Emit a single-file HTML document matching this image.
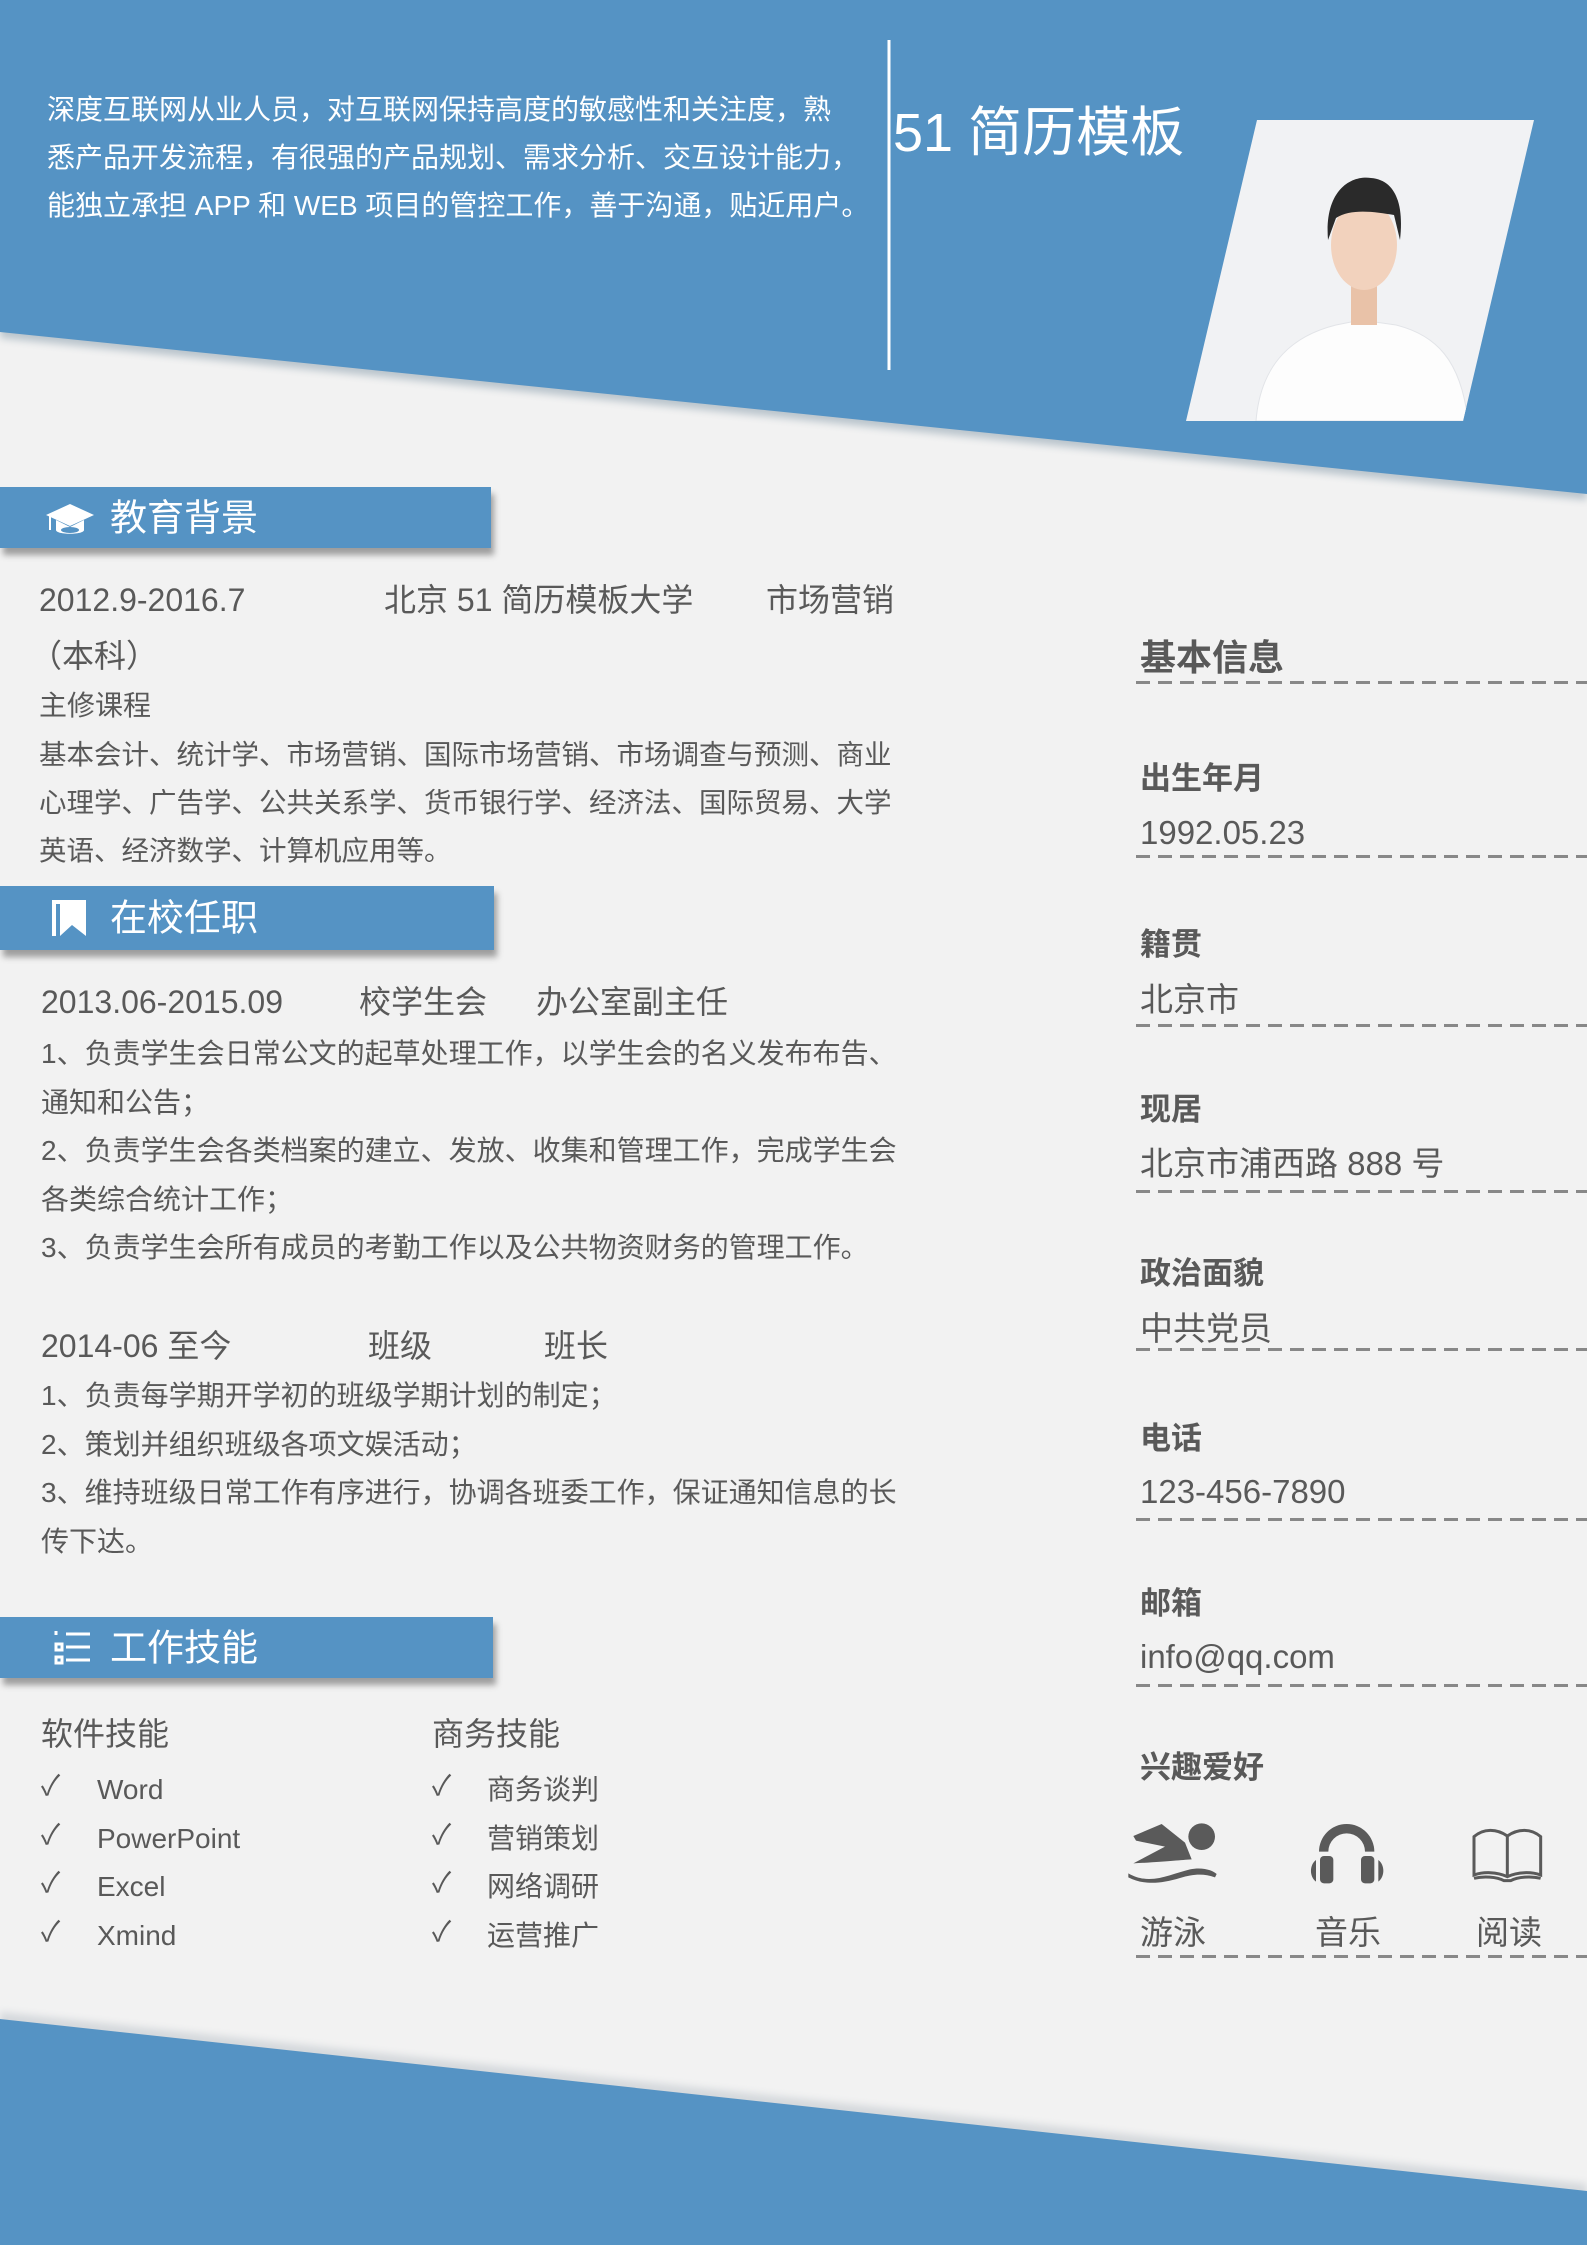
<!DOCTYPE html>
<html><head><meta charset="utf-8"><style>
*{margin:0;padding:0;box-sizing:border-box}
body{width:1587px;height:2245px;background:#f2f2f2;position:relative;overflow:hidden;font-family:"Liberation Sans","Noto Sans CJK SC",sans-serif;color:#595959}
.a{position:absolute;white-space:nowrap}
.w{color:#fff}
.bar{position:absolute;left:0;background:#5593c4;box-shadow:3px 7px 6px rgba(0,0,0,.35)}
.bar span{position:absolute;left:110px;top:50%;transform:translateY(-50%);color:#fff;font-size:37px;line-height:1}
.bar svg{position:absolute}
.dash{position:absolute;left:1136px;right:0;height:3px;background:repeating-linear-gradient(90deg,#888 0 14px,transparent 14px 22px)}
.lab{font-weight:bold;font-size:31px;line-height:40px}
.val{font-size:33px;line-height:40px}
.t28{font-size:28px;line-height:36px}
.t32{font-size:32px;line-height:40px}
</style></head><body>
<svg class="a" style="left:0;top:0" width="1587" height="2245">
<defs><filter id="s" x="-5%" y="-5%" width="110%" height="120%"><feGaussianBlur stdDeviation="4"/></filter></defs>
<polygon points="0,0 1587,0 1587,500 0,338" fill="#b9c4cc" filter="url(#s)"/>
<polygon points="0,0 1587,0 1587,494 0,332" fill="#5593c4"/>
<polygon points="0,2012 1587,2184 1587,2245 0,2245" fill="#d4d8dc" filter="url(#s)"/>
<polygon points="0,2019 1587,2191 1587,2245 0,2245" fill="#5593c4"/>
<line x1="889" y1="40" x2="889" y2="370" stroke="#fff" stroke-width="3"/>
</svg>
<div class="a w" style="left:47px;top:86px;font-size:28px;line-height:48px">深度互联网从业人员，对互联网保持高度的敏感性和关注度，熟<br>悉产品开发流程，有很强的产品规划、需求分析、交互设计能力，<br>能独立承担 APP 和 WEB 项目的管控工作，善于沟通，贴近用户。</div>
<div class="a w" style="left:893px;top:100px;font-size:54px;line-height:66px">51 简历模板</div>
<svg class="a" style="left:1186px;top:120px" width="348" height="301">
<clipPath id="c"><polygon points="71,0 348,0 277,301 0,301"/></clipPath>
<g clip-path="url(#c)">
<rect width="348" height="301" fill="#f1f2f4"/>
<path d="M70,301 C75,240 110,215 150,205 L175,200 L210,205 C250,215 275,240 282,301Z" fill="#fdfdfd" stroke="#e2e4e8"/>
<rect x="165" y="150" width="26" height="55" fill="#e9c2a8"/>
<ellipse cx="178" cy="125" rx="33" ry="45" fill="#f2d2bd"/>
<path d="M142,120 C138,70 165,55 185,58 C210,60 218,85 214,120 L208,95 C190,92 165,88 150,98Z" fill="#2a2a2a"/>
</g></svg>

<div class="bar" style="top:487px;width:491px;height:61px"><svg style="left:44px;top:15px" width="52" height="34" viewBox="0 0 52 34"><path d="M26,2 L50,13 L26,24 L2,13Z" fill="#fff"/><path d="M12,18 V28 C12,33 40,33 40,28 V18 L26,25Z" fill="#fff"/><ellipse cx="26" cy="28" rx="9" ry="3" fill="#5593c4"/><rect x="5" y="14" width="2" height="14" fill="#fff"/></svg><span>教育背景</span></div>
<div class="a t32" style="left:39px;top:580px">2012.9-2016.7</div>
<div class="a t32" style="left:384px;top:580px">北京 51 简历模板大学</div>
<div class="a t32" style="left:766px;top:580px">市场营销</div>
<div class="a t32" style="left:30px;top:636px">（本科）</div>
<div class="a t28" style="left:39px;top:688px">主修课程</div>
<div class="a" style="left:39px;top:731px;font-size:27.5px;line-height:48px">基本会计、统计学、市场营销、国际市场营销、市场调查与预测、商业<br>心理学、广告学、公共关系学、货币银行学、经济法、国际贸易、大学<br>英语、经济数学、计算机应用等。</div>

<div class="bar" style="top:886px;width:494px;height:64px"><svg style="left:50px;top:12px" width="40" height="40" viewBox="0 0 40 40"><path d="M2,2 H36 V38 L22,27 L10,38 V6 H6 V38 H2Z" fill="#fff"/></svg><span>在校任职</span></div>
<div class="a t32" style="left:41px;top:982px">2013.06-2015.09</div>
<div class="a t32" style="left:359px;top:982px">校学生会</div>
<div class="a t32" style="left:536px;top:982px">办公室副主任</div>
<div class="a" style="left:41px;top:1030px;font-size:28px;line-height:48.5px">1、负责学生会日常公文的起草处理工作，以学生会的名义发布布告、<br>通知和公告；<br>2、负责学生会各类档案的建立、发放、收集和管理工作，完成学生会<br>各类综合统计工作；<br>3、负责学生会所有成员的考勤工作以及公共物资财务的管理工作。</div>
<div class="a t32" style="left:41px;top:1326px">2014-06 至今</div>
<div class="a t32" style="left:368px;top:1326px">班级</div>
<div class="a t32" style="left:544px;top:1326px">班长</div>
<div class="a" style="left:41px;top:1372px;font-size:28px;line-height:48.5px">1、负责每学期开学初的班级学期计划的制定；<br>2、策划并组织班级各项文娱活动；<br>3、维持班级日常工作有序进行，协调各班委工作，保证通知信息的长<br>传下达。</div>

<div class="bar" style="top:1617px;width:493px;height:61px"><svg style="left:52px;top:12px" width="40" height="38" viewBox="0 0 40 38" fill="none" stroke="#fff" stroke-width="3"><path d="M4,2 V6 M14,5 H38 M4,15 H10 V21 H4Z M14,18 H38 M4,28 H10 V34 H4Z M14,31 H38"/></svg><span>工作技能</span></div>
<div class="a t32" style="left:41px;top:1714px">软件技能</div>
<div class="a t32" style="left:432px;top:1714px">商务技能</div>
<div class="a t28" style="left:41px;top:1762px;line-height:48.5px">✓<br>✓<br>✓<br>✓</div>
<div class="a t28" style="left:97px;top:1766px;line-height:48.5px">Word<br>PowerPoint<br>Excel<br>Xmind</div>
<div class="a t28" style="left:432px;top:1762px;line-height:48.5px">✓<br>✓<br>✓<br>✓</div>
<div class="a t28" style="left:487px;top:1766px;line-height:48.5px">商务谈判<br>营销策划<br>网络调研<br>运营推广</div>

<div class="a" style="left:1140px;top:636px;font-size:36px;line-height:44px;font-weight:bold">基本信息</div>
<div class="dash" style="top:681px"></div>
<div class="a lab" style="left:1140px;top:759px">出生年月</div>
<div class="a val" style="left:1140px;top:813px">1992.05.23</div>
<div class="dash" style="top:855px"></div>
<div class="a lab" style="left:1140px;top:925px">籍贯</div>
<div class="a val" style="left:1140px;top:980px">北京市</div>
<div class="dash" style="top:1024px"></div>
<div class="a lab" style="left:1140px;top:1090px">现居</div>
<div class="a val" style="left:1140px;top:1144px">北京市浦西路 888 号</div>
<div class="dash" style="top:1190px"></div>
<div class="a lab" style="left:1140px;top:1254px">政治面貌</div>
<div class="a val" style="left:1140px;top:1309px">中共党员</div>
<div class="dash" style="top:1348px"></div>
<div class="a lab" style="left:1140px;top:1419px">电话</div>
<div class="a val" style="left:1140px;top:1472px">123-456-7890</div>
<div class="dash" style="top:1518px"></div>
<div class="a lab" style="left:1140px;top:1584px">邮箱</div>
<div class="a val" style="left:1140px;top:1637px">info@qq.com</div>
<div class="dash" style="top:1684px"></div>
<div class="a lab" style="left:1140px;top:1748px">兴趣爱好</div>
<svg class="a" style="left:1100px;top:1780px" width="487" height="110" viewBox="0 0 1461 330" fill="#5a5a5a">
<circle cx="305" cy="170" r="40"/>
<path d="M100,168 L185,132 L255,188 L275,238 C240,240 200,245 100,250 L195,200 L108,182 Z"/>
<path d="M85,280 C150,318 210,282 270,268 C310,260 340,272 350,282 L345,292 C310,280 280,282 240,294 C180,312 130,315 85,292 Z"/>
<path d="M657,215 A83,83 0 0 1 823,215 L795,215 A55,55 0 0 0 685,215 Z"/>
<rect x="660" y="228" width="40" height="82" rx="12"/><rect x="783" y="228" width="40" height="82" rx="12"/>
<path d="M648,240 V305 C628,290 628,255 648,240Z M835,240 V305 C855,290 855,255 835,240Z"/>
<g fill="none" stroke="#5a5a5a" stroke-width="9"><path d="M1122,285 V170 C1150,145 1190,145 1222,168 C1254,145 1294,145 1322,170 V285 C1294,275 1254,275 1222,290 C1190,275 1150,275 1122,285Z M1222,168 V290"/><path d="M1122,295 C1150,288 1190,290 1212,302 H1232 C1254,290 1294,288 1322,295"/></g>
</svg>
<div class="a val" style="left:1140px;top:1913px">游泳</div>
<div class="a val" style="left:1315px;top:1913px">音乐</div>
<div class="a val" style="left:1476px;top:1913px">阅读</div>
<div class="dash" style="top:1955px"></div>
</body></html>
